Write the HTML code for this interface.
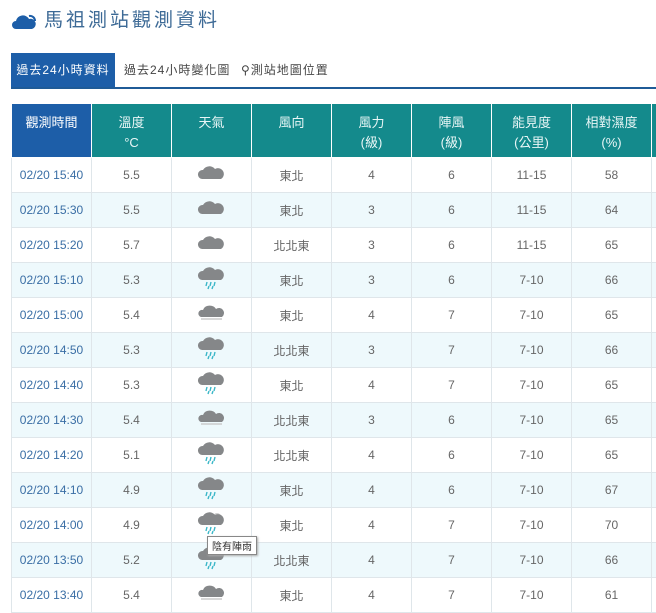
<!DOCTYPE html>
<html><head><meta charset="utf-8"><style>
body{margin:0;width:656px;height:604px;overflow:hidden;background:#fff;font-family:"Liberation Sans","Noto Sans CJK TC",sans-serif;color:#666}
.title{position:absolute;left:12px;top:5px;font-size:19px;color:#3d6a96;letter-spacing:3px}
.title svg{vertical-align:-3px;margin-right:8px}
.tabs{position:absolute;left:11px;top:53px;height:34px;width:645px;border-bottom:2px solid #1f5b97}
.tab{position:absolute;top:0;height:34px;line-height:34px;font-size:12px;color:#444;letter-spacing:1px}
.tab.a{background:#1d5ea8;color:#fff;left:0;width:104px;text-align:center}
.wrap{position:absolute;left:11px;top:103px;width:645px;height:510px;overflow:hidden}
table{border-collapse:collapse;table-layout:fixed;width:720px}
td,th{border:1px solid #dfe6ea;text-align:center;font-size:12px;height:34px;padding:0;overflow:hidden}
th{background:#148a8c;color:#e8f6f6;font-weight:normal;font-size:13px;height:54px;vertical-align:top;padding-top:9px;line-height:20px;border-color:#fff;box-sizing:border-box}
th.b{background:#1d5ea8;color:#fff}
tr:nth-child(odd) td{background:#eef9fc}
td:first-child{color:#3a6ea5}
.tip{position:absolute;left:207px;top:536px;border:1px solid #888;background:#fff;font-size:10px;padding:1px 4px;color:#333;box-shadow:1px 1px 2px #aaa}
</style></head><body>
<div class="title"><svg width="24" height="16" viewBox="0 0 24 16"><path d="M4 16a4 4 0 0 1 0-8 7 7 0 0 1 13-2 5 5 0 0 1 3 10z" fill="#1d5ea8"/><path d="M17 3a5 5 0 0 1 6 5" stroke="#1d5ea8" stroke-width="2" fill="none"/></svg>馬祖測站觀測資料</div>
<div class="tabs"><div class="tab a">過去24小時資料</div><div class="tab" style="left:113px">過去24小時變化圖</div><div class="tab" style="left:230px">⚲測站地圖位置</div></div>
<svg width="0" height="0" style="position:absolute"><defs>
<g id="c"><path d="M-10 5a4.5 4.5 0 0 1 1-9 7 6.5 0 0 1 12-1 5 5 0 0 1 6 10z" fill="#858789"/></g>
<g id="r"><use href="#c" y="-4"/><path d="M-5 3l-1 4M-1 3l-1 4M3 3l-1 4M-3 7l-1 3M1 7l-1 3" stroke="#3bb7c8" stroke-width="1.4"/></g>
<g id="f"><path d="M-11 3a3.5 3.5 0 0 1 2-7 7 6 0 0 1 13-1 4.5 4.5 0 0 1 6 8z" fill="#858789"/><path d="M-11 5h21" stroke="#ccc" stroke-width="1.6"/></g>
</defs></svg>
<div class="wrap"><table>
<colgroup><col style="width:80px"><col style="width:80px"><col style="width:80px"><col style="width:80px"><col style="width:80px"><col style="width:80px"><col style="width:80px"><col style="width:80px"><col style="width:80px"></colgroup>
<tr><th class="b">觀測時間</th><th>溫度<br>°C</th><th>天氣</th><th>風向</th><th>風力<br>(級)</th><th>陣風<br>(級)</th><th>能見度<br>(公里)</th><th>相對濕度<br>(%)</th><th></th></tr>
<tr><td>02/20 15:40</td><td>5.5</td><td><svg width="30" height="26" viewBox="-15 -13 30 26"><use href="#c"/></svg></td><td>東北</td><td>4</td><td>6</td><td>11-15</td><td>58</td><td></td></tr>
<tr><td>02/20 15:30</td><td>5.5</td><td><svg width="30" height="26" viewBox="-15 -13 30 26"><use href="#c"/></svg></td><td>東北</td><td>3</td><td>6</td><td>11-15</td><td>64</td><td></td></tr>
<tr><td>02/20 15:20</td><td>5.7</td><td><svg width="30" height="26" viewBox="-15 -13 30 26"><use href="#c"/></svg></td><td>北北東</td><td>3</td><td>6</td><td>11-15</td><td>65</td><td></td></tr>
<tr><td>02/20 15:10</td><td>5.3</td><td><svg width="30" height="26" viewBox="-15 -13 30 26"><use href="#r"/></svg></td><td>東北</td><td>3</td><td>6</td><td>7-10</td><td>66</td><td></td></tr>
<tr><td>02/20 15:00</td><td>5.4</td><td><svg width="30" height="26" viewBox="-15 -13 30 26"><use href="#f"/></svg></td><td>東北</td><td>4</td><td>7</td><td>7-10</td><td>65</td><td></td></tr>
<tr><td>02/20 14:50</td><td>5.3</td><td><svg width="30" height="26" viewBox="-15 -13 30 26"><use href="#r"/></svg></td><td>北北東</td><td>3</td><td>7</td><td>7-10</td><td>66</td><td></td></tr>
<tr><td>02/20 14:40</td><td>5.3</td><td><svg width="30" height="26" viewBox="-15 -13 30 26"><use href="#r"/></svg></td><td>東北</td><td>4</td><td>7</td><td>7-10</td><td>65</td><td></td></tr>
<tr><td>02/20 14:30</td><td>5.4</td><td><svg width="30" height="26" viewBox="-15 -13 30 26"><use href="#f"/></svg></td><td>北北東</td><td>3</td><td>6</td><td>7-10</td><td>65</td><td></td></tr>
<tr><td>02/20 14:20</td><td>5.1</td><td><svg width="30" height="26" viewBox="-15 -13 30 26"><use href="#r"/></svg></td><td>北北東</td><td>4</td><td>6</td><td>7-10</td><td>65</td><td></td></tr>
<tr><td>02/20 14:10</td><td>4.9</td><td><svg width="30" height="26" viewBox="-15 -13 30 26"><use href="#r"/></svg></td><td>東北</td><td>4</td><td>6</td><td>7-10</td><td>67</td><td></td></tr>
<tr><td>02/20 14:00</td><td>4.9</td><td><svg width="30" height="26" viewBox="-15 -13 30 26"><circle cx="5" cy="-7" r="4" fill="#ccc"/><use href="#r"/></svg></td><td>東北</td><td>4</td><td>7</td><td>7-10</td><td>70</td><td></td></tr>
<tr><td>02/20 13:50</td><td>5.2</td><td><svg width="30" height="26" viewBox="-15 -13 30 26"><use href="#r"/></svg></td><td>北北東</td><td>4</td><td>7</td><td>7-10</td><td>66</td><td></td></tr>
<tr><td>02/20 13:40</td><td>5.4</td><td><svg width="30" height="26" viewBox="-15 -13 30 26"><use href="#f"/></svg></td><td>東北</td><td>4</td><td>7</td><td>7-10</td><td>61</td><td></td></tr>
</table></div>
<div class="tip">陰有陣雨</div>
</body></html>
